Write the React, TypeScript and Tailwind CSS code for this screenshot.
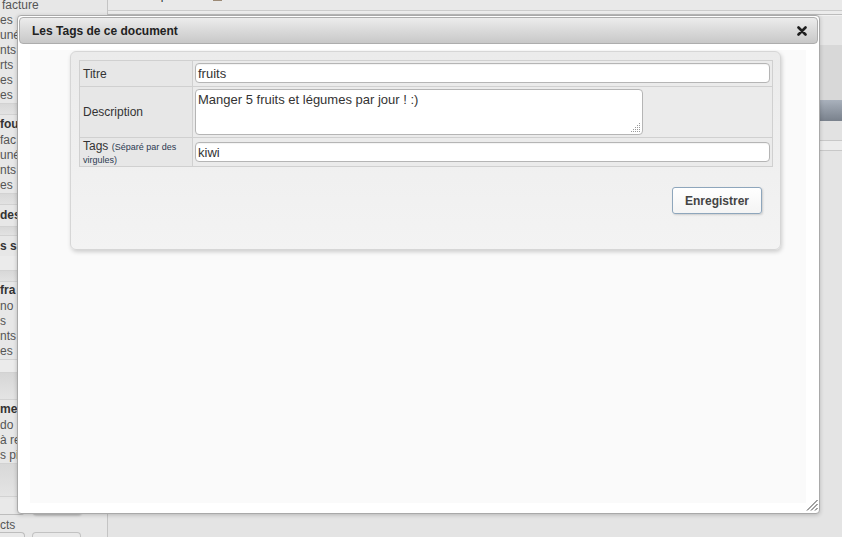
export default function App() {
  return (
    <div className="relative h-[537px] w-[842px] overflow-hidden bg-[#e4e4e4] font-['Liberation_Sans',Arial,sans-serif]">
      <div className="flex h-full">
        {/* left menu, mostly hidden behind the dialog */}
        <div className="h-full w-[108px] shrink-0 overflow-hidden border-r border-[#c4c4c4] bg-[#e7e7e7] text-[12px] text-[#555]">
          <div className="-mt-[2px]">
            <div className="h-[15px] pl-[2px] leading-[15px]">facture</div>
            <div className="h-[15px] leading-[15px]">es</div>
            <div className="h-[15px] leading-[15px]">uné</div>
            <div className="h-[15px] leading-[15px]">nts</div>
            <div className="h-[15px] leading-[15px]">rts</div>
            <div className="h-[15px] leading-[15px]">es</div>
            <div className="h-[15px] leading-[15px]">es</div>
          </div>
          <div className="h-[12px] border-y border-[#d2d2d2] bg-gradient-to-b from-[#d8d8d8] to-[#e2e2e2]" />
          <div>
            <div className="h-[18px] font-bold leading-[18px] text-[#333]">fou</div>
            <div className="h-[15px] leading-[15px]">fac</div>
            <div className="h-[15px] leading-[15px]">uné</div>
            <div className="h-[15px] leading-[15px]">nts</div>
            <div className="h-[15px] leading-[15px]">es</div>
          </div>
          <div className="h-[12px] border-y border-[#d2d2d2] bg-gradient-to-b from-[#d8d8d8] to-[#e2e2e2]" />
          <div className="h-[21px] font-bold leading-[21px] text-[#333]">des</div>
          <div className="h-[10px] border-y border-[#d2d2d2] bg-gradient-to-b from-[#d8d8d8] to-[#e2e2e2]" />
          <div className="h-[20px] font-bold leading-[20px] text-[#333]">s sp</div>
          <div className="h-[14px] bg-[#ebebeb]" />
          <div className="h-[12px] border-y border-[#d2d2d2] bg-gradient-to-b from-[#d8d8d8] to-[#e2e2e2]" />
          <div>
            <div className="h-[17px] font-bold leading-[17px] text-[#333]">fra</div>
            <div className="h-[15px] leading-[15px]">no</div>
            <div className="h-[15px] leading-[15px]">s</div>
            <div className="h-[15px] leading-[15px]">nts</div>
            <div className="h-[15px] leading-[15px]">es</div>
          </div>
          <div className="h-[13px] border-t border-[#d2d2d2] bg-[#ebebeb]" />
          <div className="h-[28px] border-y border-[#d2d2d2] bg-gradient-to-b from-[#d6d6d6] to-[#e4e4e4]" />
          <div>
            <div className="h-[18px] font-bold leading-[18px] text-[#333]">me</div>
            <div className="h-[15px] leading-[15px]">do</div>
            <div className="h-[15px] leading-[15px]">à re</div>
            <div className="h-[15px] leading-[15px]">s pi</div>
          </div>
          <div className="h-[34px] border-y border-[#d2d2d2] bg-gradient-to-b from-[#d8d8d8] to-[#e4e4e4]" />
          <div className="flex h-[18px] items-end gap-[7px]">
            <div className="h-[16px] w-[25px] rounded-br-[4px] border-r border-b border-[#bdbdbd] bg-[#e9e9e9]" />
            <div className="h-[16px] w-[49px] rounded-b-[4px] border border-t-0 border-[#c2c2c2] bg-[#e9e9e9] shadow-[1px_1px_2px_rgba(0,0,0,0.15)]" />
          </div>
          <div className="h-[16px] pt-[2px] leading-[16px]">cts</div>
          <div className="flex gap-[7px] pt-[1px]">
            <div className="h-[20px] w-[25px] rounded-tr-[4px] border-t border-r border-[#bdbdbd] bg-[#e9e9e9]" />
            <div className="h-[20px] w-[49px] rounded-t-[4px] border border-b-0 border-[#c2c2c2] bg-[#e9e9e9]" />
          </div>
        </div>

        {/* main area behind the dialog */}
        <div className="flex flex-1 flex-col">
          <div className="h-[11px] shrink-0 overflow-hidden border-b border-[#cbcbcb] bg-[#e9e9e9] pl-[2px]">
            <div className="-mt-[11px] flex items-end text-[12px] leading-[12px] text-[#888]">
              <span className="ml-[24px]">/</span>
              <span className="ml-[10px] text-[#333]">Impo</span>
              <span className="ml-[28px]">/</span>
              <span className="ml-[8px] h-[12px] w-[9px] bg-[#9c8a76]" />
            </div>
          </div>
          <div className="h-[3px] shrink-0 bg-[#ececec]" />
          <div className="h-[2px] shrink-0 border-t border-[#bcbcbc] bg-[#f2f2f2]" />
          <div className="h-[29px] shrink-0 bg-[#e6e6e6]" />
          <div className="h-[55px] shrink-0 bg-[#d8d8d8]" />
          <div className="h-[21px] shrink-0 bg-gradient-to-b from-[#a9b1bc] to-[#79818c]" />
          <div className="h-[20px] shrink-0 border-b border-[#c8c8c8] bg-[#e2e2e2]" />
          <div className="h-[10px] shrink-0 border-b border-[#c8c8c8] bg-[#ececec]" />
          <div className="flex-1 bg-[#e4e4e4]" />
        </div>
      </div>

      {/* dialog */}
      <div className="absolute left-[17px] top-[15px] flex h-[499px] w-[803px] flex-col rounded-[4px] border border-[#a9a9a9] bg-white p-[1px] shadow-[0_1px_4px_rgba(0,0,0,0.2)]">
        <div className="flex h-[27px] shrink-0 items-center justify-between rounded-[4px] border border-[#adadad] bg-gradient-to-b from-[#ececec] to-[#c8c8c8] pl-[12px] pr-[10px]">
          <span className="text-[12px] font-bold text-[#222]">Les Tags de ce document</span>
          <svg width="10" height="10" viewBox="0 0 10 10" className="mt-[1px]">
            <path d="M1.5 1.5 L8.5 8.5 M8.5 1.5 L1.5 8.5" stroke="#1e1e1e" strokeWidth="2.6" strokeLinecap="round" />
          </svg>
        </div>

        <div className="flex-1 pb-[9px] pl-[11px] pr-[12px] pt-[6px]">
          <div className="h-full bg-[#fafafa] pt-[1px]">
            <div className="ml-[40px] h-[199px] w-[711px] rounded-[6px] border border-[#d6d6d6] bg-gradient-to-b from-[#ebebeb] to-[#f3f3f3] pl-[8px] pt-[8px] shadow-[1px_2px_4px_rgba(0,0,0,0.18)]">
              <div className="w-[694px] border border-[#d0d0d0] text-[12px] text-[#333]">
                <div className="flex h-[26px] border-b border-[#d0d0d0]">
                  <div className="flex w-[113px] items-center border-r border-[#d0d0d0] bg-[#e7e7e7] pl-[3px]">Titre</div>
                  <div className="flex flex-1 items-start bg-[#ebebeb] pl-[2px] pt-[2px]">
                    <div className="h-[20px] w-[575px] rounded-[4px] border border-[#b5b5b5] bg-white pl-[2px] text-[13px] leading-[19px] text-[#333] shadow-[inset_0_1px_1px_rgba(0,0,0,0.05)]">
                      fruits
                    </div>
                  </div>
                </div>
                <div className="flex h-[51px] border-b border-[#d0d0d0]">
                  <div className="flex w-[113px] items-center border-r border-[#d0d0d0] bg-[#e7e7e7] pl-[3px]">Description</div>
                  <div className="flex-1 bg-[#ebebeb] pl-[2px] pt-[2px]">
                    <div className="relative h-[46px] w-[448px] rounded-[4px] border border-[#b5b5b5] bg-white px-[2px] pt-[2px] text-[13px] leading-[16px] text-[#333]">
                      Manger 5 fruits et légumes par jour ! :)
                      <svg width="10" height="10" viewBox="0 0 10 10" className="absolute bottom-[1px] right-[1px]">
                        <g fill="#9a9a9a">
                          <rect x="8" y="0" width="1" height="1" />
                          <rect x="6" y="2" width="1" height="1" />
                          <rect x="8" y="2" width="1" height="1" />
                          <rect x="4" y="4" width="1" height="1" />
                          <rect x="6" y="4" width="1" height="1" />
                          <rect x="8" y="4" width="1" height="1" />
                          <rect x="2" y="6" width="1" height="1" />
                          <rect x="4" y="6" width="1" height="1" />
                          <rect x="6" y="6" width="1" height="1" />
                          <rect x="8" y="6" width="1" height="1" />
                          <rect x="0" y="8" width="1" height="1" />
                          <rect x="2" y="8" width="1" height="1" />
                          <rect x="4" y="8" width="1" height="1" />
                          <rect x="6" y="8" width="1" height="1" />
                          <rect x="8" y="8" width="1" height="1" />
                        </g>
                      </svg>
                    </div>
                  </div>
                </div>
                <div className="flex h-[28px]">
                  <div className="w-[113px] border-r border-[#d0d0d0] bg-[#e7e7e7] pl-[3px] pt-[2px] leading-[12px]">
                    Tags <span className="text-[9px] text-[#2c3a52]">(Séparé par des virgules)</span>
                  </div>
                  <div className="flex-1 bg-[#ebebeb] pl-[2px] pt-[4px]">
                    <div className="h-[20px] w-[575px] rounded-[4px] border border-[#b5b5b5] bg-white pl-[2px] text-[13px] leading-[19px] text-[#333] shadow-[inset_0_1px_1px_rgba(0,0,0,0.05)]">
                      kiwi
                    </div>
                  </div>
                </div>
              </div>
              <div className="mr-[18px] mt-[20px] flex justify-end">
                <button className="h-[27px] w-[90px] rounded-[3px] border border-[#8ea6bc] bg-gradient-to-b from-white to-[#f4f4f4] text-[12px] font-bold text-[#444] shadow-[1px_1px_2px_rgba(0,0,0,0.15)]">
                  Enregistrer
                </button>
              </div>
            </div>
          </div>
        </div>

        {/* resize grip */}
        <svg width="12" height="12" viewBox="0 0 12 12" className="absolute bottom-[2px] right-[1px]">
          <path d="M11.5 1 L1 11.5 M11.5 5 L5 11.5 M11.5 9 L9 11.5" stroke="#444" strokeWidth="1" />
        </svg>
      </div>
    </div>
  );
}
